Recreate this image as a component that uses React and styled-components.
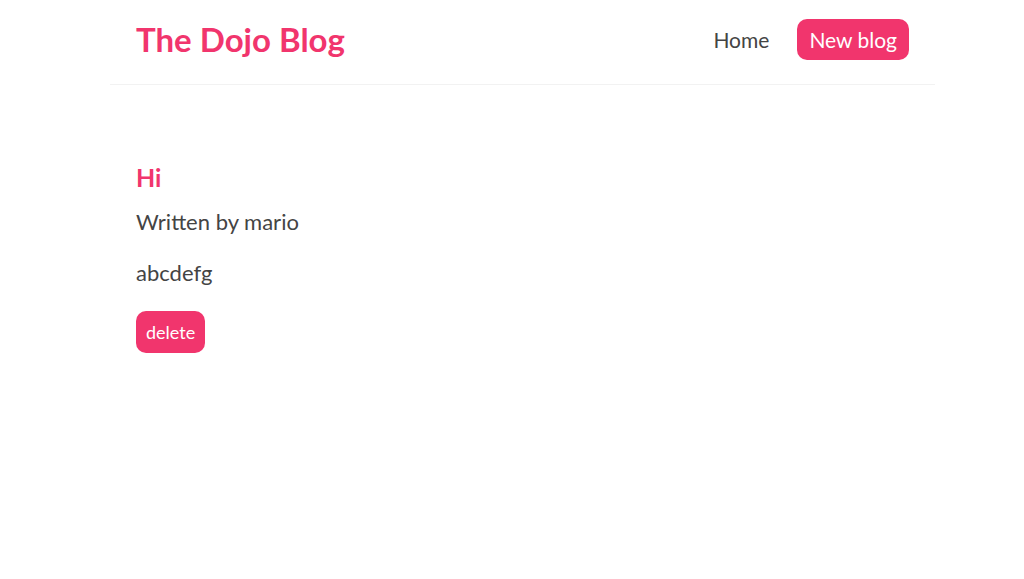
import React from 'react'
import styled, { createGlobalStyle } from 'styled-components'

const Global = createGlobalStyle`
  * {
    margin: 0;
    box-sizing: border-box;
    font-family: Lato, "Noto Sans", sans-serif;
    color: #333;
  }
  body {
    background: #fff;
  }
`

const Page = styled.div`
  padding-left: 21px;
`

const Nav = styled.nav`
  display: flex;
  align-items: center;
  max-width: 825px;
  height: 85px;
  margin: 0 auto;
  padding: 0 26px 6px;
  border-bottom: 1px solid #f2f2f2;
`

const Title = styled.h1`
  font-size: 33px;
  font-weight: 700;
  color: #f1356d;
`

const Links = styled.div`
  margin-left: auto;
  display: flex;
  align-items: center;
`

const NavLink = styled.a`
  margin-left: 16px;
  padding: 7px 12px;
  font-size: 21px;
  text-decoration: none;
  line-height: 27px;
  border-radius: 10px;
  color: ${p => (p.$primary ? '#fff' : '#444')};
  background: ${p => (p.$primary ? '#f1356d' : 'transparent')};
`

const Content = styled.div`
  max-width: 825px;
  margin: 0 auto;
  padding: 77px 26px;
`

const Heading = styled.h2`
  font-size: 25px;
  font-weight: 700;
  color: #f1356d;
  margin-bottom: 16px;
`

const Author = styled.p`
  font-size: 22px;
  color: #444;
`

const Body = styled.div`
  margin: 24px 0 25px;
  font-size: 22px;
  color: #444;
`

const Button = styled.button`
  background: #f1356d;
  color: #fff;
  border: 0;
  padding: 10px;
  border-radius: 10px;
  font-size: 18px;
  line-height: 22px;
  cursor: pointer;
`

export default function App() {
  return (
    <Page>
      <Global />
      <Nav>
        <Title>The Dojo Blog</Title>
        <Links>
          <NavLink href="#">Home</NavLink>
          <NavLink href="#" $primary>New blog</NavLink>
        </Links>
      </Nav>
      <Content>
        <Heading>Hi</Heading>
        <Author>Written by mario</Author>
        <Body>abcdefg</Body>
        <Button>delete</Button>
      </Content>
    </Page>
  )
}
